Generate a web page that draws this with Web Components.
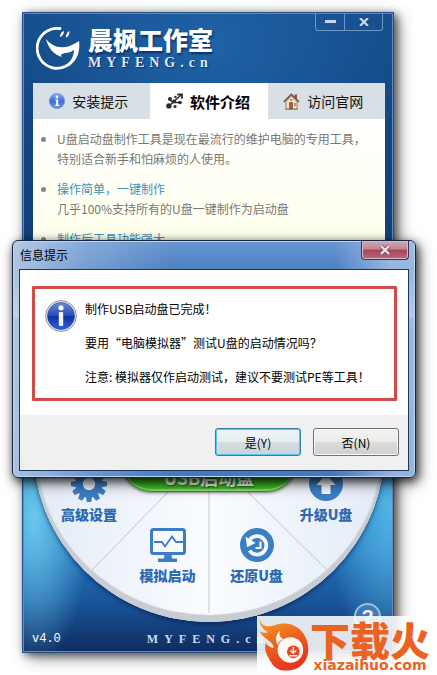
<!DOCTYPE html>
<html lang="zh-CN">
<head>
<meta charset="utf-8">
<meta name="viewport" content="width=device-width, initial-scale=1">
<title>晨枫工作室</title>
<style>
body { margin: 0; background: #fff; font-family: "Noto Sans CJK SC", "Liberation Sans", sans-serif; font-size: 12px; color: #000; }
</style>
</head>
<body>
<desktop-stage>
  <app-window>
    <app-header slot="header" name="晨枫工作室" site="MYFENG.cn"></app-header>
    <tab-strip slot="body">
      <tab-item icon="info">安装提示</tab-item>
      <tab-item icon="tools" active>软件介绍</tab-item>
      <tab-item icon="home">访问官网</tab-item>
    </tab-strip>
    <feature-list slot="body">
      <feature-item>U盘启动盘制作工具是现在最流行的维护电脑的专用工具，特别适合新手和怕麻烦的人使用。</feature-item>
      <feature-item heading="操作简单，一键制作">几乎100%支持所有的U盘一键制作为启动盘</feature-item>
      <feature-item heading="制作后工具功能强大"></feature-item>
    </feature-list>
    <action-dial slot="body">
      <dial-action slot="upper" icon="gear">高级设置</dial-action>
      <dial-action slot="upper" icon="up">升级U盘</dial-action>
      <dial-action slot="lower" icon="monitor">模拟启动</dial-action>
      <dial-action slot="lower" icon="restore">还原U盘</dial-action>
      <span slot="main">USB启动盘</span>
    </action-dial>
    <app-footer slot="footer" version="v4.0" site="MYFENG.cn"></app-footer>
  </app-window>
  <message-dialog slot="overlay" heading="信息提示">
    <p>制作USB启动盘已完成！</p>
    <p>要用“电脑模拟器”测试U盘的启动情况吗？</p>
    <p>注意: 模拟器仅作启动测试，建议不要测试PE等工具！</p>
    <push-button slot="actions" primary>是(Y)</push-button>
    <push-button slot="actions">否(N)</push-button>
  </message-dialog>
  <site-badge slot="overlay"></site-badge>
</desktop-stage>

<script>
const define = (tag, render) => customElements.define(tag, class extends HTMLElement {
  connectedCallback() {
    if (this.shadowRoot) return;
    this.attachShadow({ mode: 'open' }).innerHTML = render(this);
  }
});
const attr = (el, n) => el.getAttribute(n) || '';

const ICONS = {
  info: `<svg width="16" height="16" viewBox="0 0 16 16" aria-hidden="true"><defs><linearGradient id="g" x1="0" y1="0" x2="0" y2="1"><stop offset="0" stop-color="#8eaaf0"/><stop offset=".5" stop-color="#3f6bdc"/><stop offset="1" stop-color="#6d92ea"/></linearGradient></defs><circle cx="8" cy="8" r="7.600" fill="url(#g)" stroke="#6d86cc" stroke-width=".7"/><circle cx="8" cy="4" r="1.400" fill="#fff"/><path d="M6.400 6.500h2.800v5.300h1v1.200H6.200v-1.200h1V7.700h-.8z" fill="#fff"/></svg>`,
  tools: `<svg width="17" height="16" viewBox="0 0 17 16" aria-hidden="true"><g fill="none" stroke="#2c2c2c" stroke-linecap="round"><path d="M3 13L15 2" stroke-width="1.500"/><path d="M3 6l3.500 3 7 .8" stroke-width="1.500"/><path d="M12 1.500h4v3.500" stroke-width="1.800"/></g><g fill="#2c2c2c"><circle cx="2.900" cy="12.900" r="2.700"/><circle cx="9" cy="13.500" r="1.600"/><circle cx="4" cy="6" r="2"/><circle cx="8" cy="8.500" r="2"/><circle cx="14" cy="9.500" r="1.800"/><circle cx="9.500" cy="4" r="1.200"/></g></svg>`,
  home: `<svg width="17" height="17" viewBox="0 0 17 17" aria-hidden="true"><path d="M11.500 1.500h2.500v5l-2.500-2z" fill="#9c5039"/><path d="M3 8.500L8.500 3 14 8.500V16H3z" fill="#f8dfbe" stroke="#85674e" stroke-width=".8"/><path d="M.8 9L8.300 1.300 16 9" fill="none" stroke="#7b4934" stroke-width="1.500"/><path d="M6.500 9.500h3V16h-3z" fill="#ac5733" stroke="#7a3e27" stroke-width=".6"/><path d="M11 10h2v3h-2zM7 6h2.500v2H7z" fill="#8d9fae"/><path d="M2 16.300h13" stroke="#71944a"/></svg>`,
  gear: `<svg width="36" height="36" viewBox="-18 -18 36 36" aria-hidden="true"><g fill="#3c7dc4"><circle r="13.500"/><path id="a" d="M-3.200-12l1-6h4.400l1 6zM-3.200 12l1 6h4.400l1-6z"/><use href="#a" transform="rotate(30)"/><use href="#a" transform="rotate(60)"/><use href="#a" transform="rotate(90)"/><use href="#a" transform="rotate(120)"/><use href="#a" transform="rotate(150)"/></g><circle r="6.200" fill="#edf2fa"/></svg>`,
  up: `<svg width="36" height="36" viewBox="-18 -18 36 36" aria-hidden="true"><circle r="17" fill="#3c7dc4"/><path d="M0-10L9.500 1H4.500V10h-9V1h-5z" fill="#f4f8fd"/></svg>`,
  monitor: `<svg width="36" height="36" viewBox="0 0 36 36" aria-hidden="true"><rect x="1.500" y="2.500" width="33" height="24" rx="2" fill="#f6f9fe" stroke="#3c7dc4" stroke-width="3"/><path d="M4 15h8l3 4.500 7-10 4 5.500h7" fill="none" stroke="#3c7dc4" stroke-width="1.800"/><path d="M14.500 27h7l.5 4.500h5V35H8v-3.500h6z" fill="#3c7dc4"/></svg>`,
  restore: `<svg width="36" height="36" viewBox="-18 -18 36 36" aria-hidden="true"><circle r="17" fill="#3c7dc4"/><path d="M-7-5.500A9.200 9.200 0 1 1-7.500 5.500" fill="none" stroke="#f4f8fd" stroke-width="3.800"/><path d="M-11.500-8.500l1.500 10.800L-1.500-2z" fill="#f4f8fd"/><path d="M3.500-3.500V3h-5" fill="none" stroke="#f4f8fd" stroke-width="2.200"/></svg>`
};

define('desktop-stage', () => `
<style>
:host { display: block; position: relative; padding: 12px 43px 21px 22px; overflow: hidden; }
</style><slot></slot><slot name="overlay"></slot>`);

define('app-window', () => `
<style>
:host { display: block; position: relative; border: 1px solid #234f86; box-shadow: inset 0 0 0 1px #5f8bbd, 3px 2px 8px rgba(0,0,0,.55), 5px 5px 15px rgba(0,0,0,.4);
  background:
    radial-gradient(ellipse 56px 150px at 3% 79%, rgba(112,207,241,.9), rgba(80,180,228,0)),
    radial-gradient(ellipse 60px 160px at 99% 78%, rgba(92,190,235,.8), rgba(80,180,228,0)),
    radial-gradient(ellipse 210px 150px at 50% 5%, rgba(32,101,170,.9), rgba(32,101,170,0)),
    linear-gradient(#154c8a 0, #123f78 38%, #2b8bcb 72%, #2376bd 84%, #1a559b 92%, #0f2c60 100%); }
main { padding: 0 8px 0 10px; }
</style><slot name="header"></slot><main><slot name="body"></slot></main><slot name="footer"></slot>`);

define('app-header', el => `
<style>
:host { display: flex; align-items: flex-start; justify-content: space-between; height: 70px; padding: 0 10px 0 13px; color: #fff; }
.brand { display: flex; align-items: center; gap: 8px; padding-top: 12px; }
.words { display: flex; flex-direction: column; gap: 1px; }
h1 { margin: 0; font-size: 25px; line-height: 29px; font-weight: 900; text-shadow: 1px 2px 2px rgba(0,20,60,.6); }
.site { font: 700 14px/16px "Liberation Serif", serif; letter-spacing: 5px; color: #dbe9f8; text-shadow: 1px 1px 1px rgba(0,20,60,.6); }
.controls { display: flex; border: 1px solid #6b96c6; border-top: 0; border-radius: 0 0 3px 3px; }
button { display: grid; place-items: center; width: 28px; height: 17px; padding: 0; border: 0; background: none; color: #c5d6e8; }
button + button { width: 38px; border-left: 1px solid #6b96c6; }
</style>
<div class="brand">
  <svg width="44" height="44" viewBox="0 0 44 44" aria-hidden="true"><path d="M24 2.500A20 20 0 1 0 40 29" fill="none" stroke="#fff" stroke-width="2.800" stroke-linecap="round"/><path d="M43 15c2 14-5 25-18 27 9-5 13-10 13-19z" fill="#fff"/><path d="M10 13c7 9 19 12 33 2-2 8-7 12-14 12-4 1-5 2-3 4-8-2-14-9-16-18z" fill="#fff"/><path d="M24 9.500c1-3 2.500-4 4-4.500 0 2.500-1 5-4 6zM30 9.800c1-3 2-4.300 3.500-4.800 0 3-1 6-3.800 6.500z" fill="#fff"/></svg>
  <div class="words"><h1>${attr(el, 'name')}</h1><span class="site">${attr(el, 'site')}</span></div>
</div>
<div class="controls">
  <button aria-label="最小化"><svg width="11" height="5"><rect x="0" y="1" width="11" height="3" fill="currentColor"/></svg></button>
  <button aria-label="关闭"><svg width="10" height="8" viewBox="0 0 10 8"><path d="M1 0l8 8M9 0L1 8" stroke="currentColor" stroke-width="2.200"/></svg></button>
</div>`);

define('tab-strip', () => `
<style>:host { display: flex; background: #d8dfe6; }</style><slot></slot>`);

define('tab-item', el => `
<style>
:host { display: flex; flex: 1; }
button { display: flex; flex: 1; align-items: center; justify-content: center; gap: 7px; height: 36px; padding: 0 6px 0 0; border: 0; background: #d8dfe5; font: inherit; font-size: 14px; color: #111; white-space: nowrap; }
:host([active]) button { padding-right: 2px; background: #fff; font-size: 15px; font-weight: 700; color: #000; }
</style><button>${ICONS[attr(el, 'icon')]}<slot></slot></button>`);

define('feature-list', () => `
<style>
:host { display: block; min-height: 140px; padding: 10px 8px 1px; background: linear-gradient(#fff, #ffffef 70%, #ffffe8); color: #777; }
div { display: flex; flex-direction: column; gap: 10px; }
</style><div role="list"><slot></slot></div>`);

define('feature-item', el => `
<style>
:host { display: grid; grid-template-columns: 16px 1fr; font-size: 12px; line-height: 20px; }
:host::before { content: ""; width: 5px; height: 5px; margin-top: 8px; border-radius: 50%; background: #858585; }
h2 { margin: 0; font: inherit; color: #3a92bd; }
p { margin: 0; max-width: 316px; }
</style><div role="listitem">${el.hasAttribute('heading') ? `<h2>${attr(el, 'heading')}</h2>` : ''}<p><slot></slot></p></div>`);

define('action-dial', () => `
<style>
:host { display: flex; flex-direction: column; justify-content: flex-end; position: relative; box-sizing: border-box; aspect-ratio: 1; padding-bottom: 37px; border-radius: 50%; background: linear-gradient(90deg, #e3ebf6, #fafcff 50%, #e3ebf6); box-shadow: inset 0 -7px 1px #c9ccd2, inset 0 0 2px 3px #ccd1d8, 0 2px 5px rgba(0,20,60,.6); }
.lines { position: absolute; inset: 0; width: 100%; height: 100%; }
.row { display: flex; position: relative; }
.upper { justify-content: space-between; padding: 0 29px 0 26px; }
.lower { justify-content: center; gap: 29px; padding: 3px 0 0 6px; }
.main { position: absolute; left: 25%; right: 25%; bottom: 130px; height: 60px; padding: 30px 0 0; border: 1px solid #289a20; border-radius: 30px; background: linear-gradient(#5ac33a, #28a716 70%, #47c42b); box-shadow: inset 0 -2px 1px #8cdc6d, 0 1px 3px rgba(0,0,0,.5); color: #fff; font: inherit; font-size: 18px; line-height: 16px; font-weight: 700; text-shadow: 1px 1px 2px #146b0c; }
</style>
<svg class="lines" viewBox="0 0 352 352" aria-hidden="true"><path d="M176 222V343M135 222L59 300M215 222l78 77" stroke="#c2c7cf" fill="none"/></svg>
<div class="row upper"><slot name="upper"></slot></div>
<div class="row lower"><slot name="lower"></slot></div>
<button class="main"><slot name="main"></slot></button>`);

define('dial-action', el => `
<style>
:host { display: block; }
button { display: flex; flex-direction: column; align-items: center; width: 60px; padding: 0; border: 0; background: none; font: inherit; font-size: 14px; line-height: 20px; font-weight: 900; color: #2c69b0; white-space: nowrap; gap: 2px; }
</style><button>${ICONS[attr(el, 'icon')]}<span><slot></slot></span></button>`);

define('app-footer', el => `
<style>
:host { display: flex; align-items: center; height: 30px; padding: 3px 9px 0; color: #fff; box-sizing: border-box; }
.version { flex: 1; font: 12px/16px "Liberation Mono", monospace; }
.site { font: 700 12px/16px "Liberation Serif", serif; letter-spacing: 6px; color: #cbdcef; }
.space { flex: 1; }
button { position: absolute; right: 12px; bottom: 22px; width: 27px; height: 27px; padding: 0; border: 2px solid #9dbfe3; border-radius: 50%; background: rgba(90,140,200,.5); color: #e6f1fc; font: 700 20px/22px "Liberation Sans", sans-serif; }
</style><span class="version">${attr(el, 'version')}</span><span class="site">${attr(el, 'site')}</span><span class="space"></span><button aria-label="帮助">?</button>`);

define('message-dialog', el => `
<style>
:host { display: block; position: absolute; left: 12px; right: 21px; top: 240px; border: 1px solid #17253f; border-radius: 6px; padding: 0 6px 6px; box-shadow: inset 0 0 0 1px #bcd5f2, 2px 3px 8px rgba(0,0,0,.65), 3px 5px 15px rgba(0,0,0,.5);
  background: linear-gradient(90deg, rgba(205,218,238,.75) 0, rgba(180,203,233,.4) 18%, transparent 40%, transparent 80%, rgba(190,211,239,.65) 94%), linear-gradient(#6795cf 0, #4c7fc0 30px, #9bbae0 75px, #5a8dcc 78px, #4678bd 100%); }
header { display: flex; align-items: flex-start; justify-content: space-between; height: 28px; }
h2 { margin: 0; padding-left: 1px; font-size: 12px; line-height: 27px; font-weight: 400; }
.close { display: grid; place-items: center; width: 48px; height: 19px; padding: 0; border: 1px solid #422f49; border-top: 0; border-radius: 0 0 4px 4px; background: linear-gradient(#cfa5b3, #c18794 45%, #aa4356 50%, #bb6979); box-shadow: inset 0 0 0 1px #d9b9c9; }
.frame { border: 1px solid #1d365c; background: #fff; }
.body { padding: 16px 11px 14px 12px; }
.notice { display: grid; grid-template-columns: 32px 1fr; gap: 8px; border: 3px solid #d34b49; border-radius: 1px; padding: 3px 10px 4px; }
.notice svg { margin-top: 8px; }
.text { line-height: 34px; }
::slotted(p) { margin: 0; }
footer { display: flex; justify-content: flex-end; gap: 12px; padding: 13px 9px 14px; background: #f0f0f0; }
</style>
<header><h2>${attr(el, 'heading')}</h2><button class="close" aria-label="关闭"><svg width="12" height="10" viewBox="0 0 12 10"><path d="M2 1l8 8M10 1L2 9" stroke="#75516a" stroke-width="4"/><path d="M2 1l8 8M10 1L2 9" stroke="#eee1e7" stroke-width="2.400"/></svg></button></header>
<div class="frame" role="dialog" aria-label="${attr(el, 'heading')}">
  <div class="body"><div class="notice">
    <svg width="32" height="32" viewBox="0 0 32 32" aria-hidden="true"><defs><linearGradient id="b" x1="0" y1="0" x2="0" y2="1"><stop offset="0" stop-color="#6d8bdd"/><stop offset=".5" stop-color="#2749b5"/><stop offset=".52" stop-color="#102fa8"/><stop offset="1" stop-color="#2d63dd"/></linearGradient></defs><circle cx="16" cy="16" r="15.400" fill="#e5e8ed" stroke="#8c949f"/><circle cx="16" cy="16" r="13.500" fill="url(#b)" stroke="#27428f" stroke-width=".6"/><circle cx="16" cy="7.800" r="2.600" fill="#fff"/><rect x="13.800" y="12" width="4.400" height="14" rx="1" fill="#f2f4fa"/></svg>
    <div class="text"><slot></slot></div>
  </div></div>
  <footer><slot name="actions"></slot></footer>
</div>`);

define('push-button', () => `
<style>
:host { display: block; }
button { width: 86px; height: 28px; padding: 0; border: 1px solid #707070; border-radius: 3px; background: linear-gradient(#f3f3f3, #ebebeb 50%, #dcdcdc 50%, #cfcfcf); box-shadow: inset 0 0 0 1px #fafafa; font: inherit; font-size: 12px; color: #000; }
:host([primary]) button { border-color: #327fa0; background: linear-gradient(#f1f5f7, #e6edf0 50%, #d4dee3 50%, #c9d5da); box-shadow: inset 0 0 0 1px #59c8ec; }
</style><button><slot></slot></button>`);

define('site-badge', () => `
<style>
:host { position: absolute; right: 0; bottom: 2px; display: block; }
a { display: flex; align-items: center; width: 180px; height: 56px; box-sizing: border-box; background: rgba(255,255,255,.87); color: #ec6222; text-decoration: none; white-space: nowrap; }
.words { display: flex; flex-direction: column; align-items: center; padding-top: 3px; }
.cn { font-size: 40px; line-height: 40px; font-weight: 900; }
.en { font: 700 14px/13px "DejaVu Sans", sans-serif; }
</style>
<a href="#"><svg width="53" height="56" viewBox="0 0 54 56" aria-hidden="true"><defs><linearGradient id="f" x1="0" y1="0" x2=".4" y2="1"><stop offset="0" stop-color="#f9a11f"/><stop offset=".5" stop-color="#ee651f"/><stop offset="1" stop-color="#e5381d"/></linearGradient></defs><path d="M3 2c1 8 7 9 15 7 15-6 32 3 34 21 2 15-9 26-23 25-8 0-12-4-15-9-5-8-7-13-5-19 2 3 5 5 8 5 0-7-11-9-14-17 3 2 6 2 8 1C6 13 2 8 3 2z" fill="url(#f)"/><path d="M24 14c-2 4-1 7 3 9-3 1-5 3-6 6-3-5-2-11 3-15z" fill="#fff3e6"/><circle cx="34" cy="34" r="13" fill="#fff8f3"/><circle cx="37" cy="36" r="6.500" fill="#e94720"/><path d="M37 31v6m-3-2.500l3 3 3-3M33 40h8" stroke="#fff" stroke-width="1.400" fill="none"/></svg><span class="words"><span class="cn">下载火</span><span class="en">xiazaihuo.com</span></span></a>`);
</script>
</body>
</html>
